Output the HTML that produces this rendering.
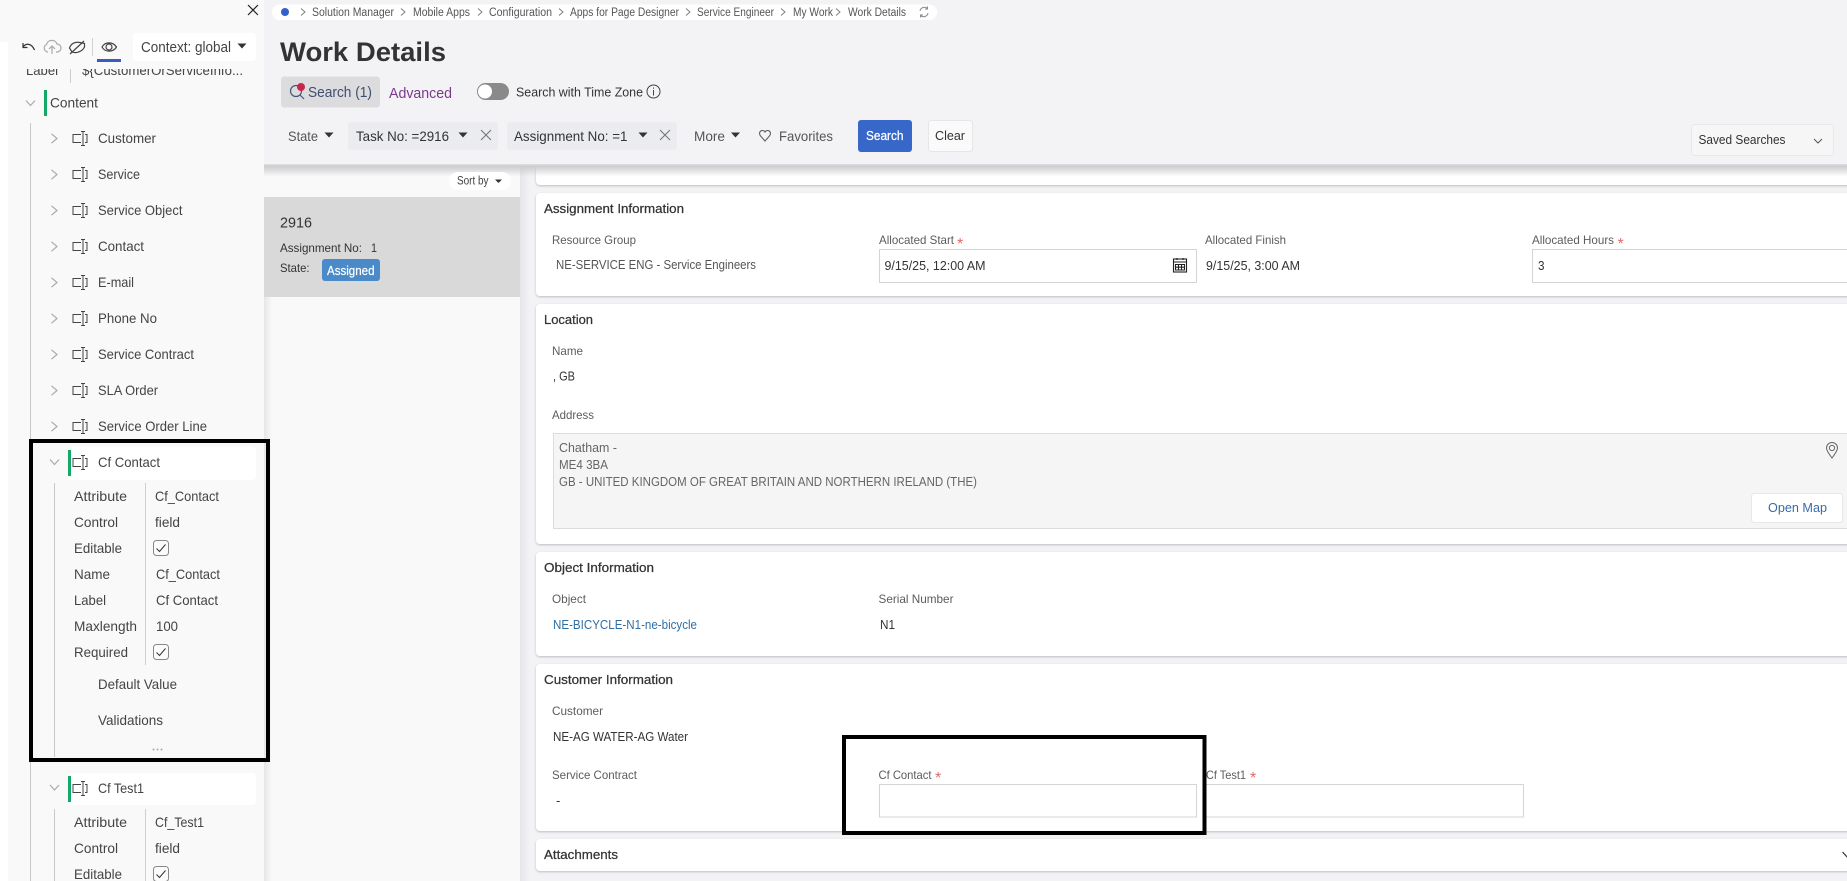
<!DOCTYPE html>
<html lang="en">
<head>
<meta charset="utf-8">
<title>Work Details</title>
<style>
html,body{margin:0;padding:0;width:1847px;height:881px;overflow:hidden;background:#f3f2f5}
svg{display:block}
text{font-family:"Liberation Sans",Arial,sans-serif;white-space:pre}
.t{font-size:14px;fill:#444}
.l{font-size:12px;fill:#5c5c5c}
.v{font-size:13px;fill:#333}
.h{font-size:13px;fill:#333;stroke:#333;stroke-width:.25}
.b{font-size:11.5px;fill:#555}
.f{font-size:14px;fill:#555}
.r{font-size:16px;fill:#e06a6a}
.cards{filter:drop-shadow(0 1px 1px rgba(0,0,0,.22))}
</style>
</head>
<body>
<svg xmlns="http://www.w3.org/2000/svg" width="1847" height="881" viewBox="0 0 1847 881">
<defs>
<linearGradient id="sh" x1="0" y1="0" x2="0" y2="1"><stop offset="0" stop-color="#c9c9cb"/><stop offset="1" stop-color="#c9c9cb" stop-opacity="0"/></linearGradient>
<linearGradient id="sv" x1="0" y1="0" x2="1" y2="0"><stop offset="0" stop-color="#e6e6e8"/><stop offset="1" stop-color="#e6e6e8" stop-opacity="0"/></linearGradient>
<g id="fld" fill="none" stroke="#444" stroke-width="1"><path d="M1-4H-7V4H1M3-7V7M1-7H5M1 7H5M5-4H7V4H5"/></g>
<path id="cr" d="M-2.5-4.7L3 0-2.5 4.7" fill="none" stroke="#aaa" stroke-width="1.2"/>
<path id="cd" d="M-4.5-2.5L0 2.5 4.5-2.5" fill="none" stroke="#aaa" stroke-width="1.2"/>
<path id="bc" d="M-2-3.5L2 0-2 3.5" fill="none" stroke="#777" stroke-width=".9"/>
<path id="tri" d="M-4.5-2.5H4.5L0 2.5Z" fill="#333"/>
<path id="x" d="M-5-5L5 5M5-5L-5 5" fill="none" stroke="#777" stroke-width="1.1"/>
<g id="chk"><rect x="0.5" y="0.5" width="15" height="15" rx="3" fill="#fbfbfb" stroke="#888"/><path d="M3.5 8.5L6.5 11.5 12.5 4.5" fill="none" stroke="#333" stroke-width="1"/></g>
</defs>

<!-- base -->
<rect width="1847" height="881" fill="#f3f2f5"/>
<!-- left panel -->
<rect x="0" y="0" width="264" height="881" fill="#ffffff"/>
<rect x="0" y="0" width="264" height="42" fill="#f9f9f9"/>
<rect x="8" y="42" width="256" height="839" fill="#f9f9f9"/>
<!-- list column -->
<rect x="264" y="165" width="256" height="716" fill="#f9f9f9"/>
<rect x="264" y="297" width="8" height="584" fill="url(#sv)"/>
<rect x="520" y="165" width="10" height="716" fill="url(#sv)"/>

<!-- cards -->
<g fill="#fff" class="cards">
<rect x="536" y="150" width="1320" height="35" rx="4"/>
<rect x="536" y="193" width="1320" height="103" rx="4"/>
<rect x="536" y="304" width="1320" height="240" rx="4"/>
<rect x="536" y="552" width="1320" height="104" rx="4"/>
<rect x="536" y="664" width="1320" height="167" rx="4"/>
<rect x="536" y="839" width="1320" height="32" rx="4"/>
</g>

<!-- header -->
<rect x="264" y="0" width="1583" height="165" fill="#f3f2f5"/>
<rect x="264" y="164" width="1583" height="1.5" fill="#dcdcde"/>
<rect x="264" y="165.5" width="1583" height="11" fill="url(#sh)"/>

<!-- breadcrumb -->
<rect x="272" y="4.5" width="665" height="15.5" rx="7.7" fill="#fff"/>
<circle cx="285" cy="12" r="4" fill="#3560c8"/>
<use href="#bc" x="303" y="12"/><text class="b" x="312" y="16" textLength="82" lengthAdjust="spacingAndGlyphs">Solution Manager</text>
<use href="#bc" x="403" y="12"/><text class="b" x="413" y="16" textLength="57" lengthAdjust="spacingAndGlyphs">Mobile Apps</text>
<use href="#bc" x="480" y="12"/><text class="b" x="489" y="16" textLength="63" lengthAdjust="spacingAndGlyphs">Configuration</text>
<use href="#bc" x="561" y="12"/><text class="b" x="570" y="16" textLength="109" lengthAdjust="spacingAndGlyphs">Apps for Page Designer</text>
<use href="#bc" x="688" y="12"/><text class="b" x="697" y="16" textLength="77" lengthAdjust="spacingAndGlyphs">Service Engineer</text>
<use href="#bc" x="783" y="12"/><text class="b" x="793" y="16" textLength="40" lengthAdjust="spacingAndGlyphs">My Work</text>
<use href="#bc" x="838" y="12"/><text class="b" x="848" y="16" textLength="58" lengthAdjust="spacingAndGlyphs">Work Details</text>
<g fill="none" stroke="#888" stroke-width="1"><path d="M920 11a4.5 4.5 0 0 1 7.5-2.5M928 13a4.5 4.5 0 0 1-7.5 2.5"/><path d="M927.5 6.5V9H925M920.5 17.5V15H923"/></g>

<!-- title -->
<text x="280" y="61" font-size="27" font-weight="bold" fill="#333" textLength="166" lengthAdjust="spacingAndGlyphs">Work Details</text>

<!-- search tabs -->
<rect x="281" y="76.5" width="99" height="31" rx="3" fill="#dcdcde"/>
<circle cx="296" cy="91" r="5.5" fill="none" stroke="#44557a" stroke-width="1.2"/><path d="M300 95L304 99" stroke="#44557a" stroke-width="1.2"/>
<circle cx="301" cy="87" r="4" fill="#c8264a"/>
<text x="308" y="97" font-size="14.5" fill="#3f4d6e" textLength="64" lengthAdjust="spacingAndGlyphs">Search (1)</text>
<text x="389" y="98" font-size="14.5" fill="#7b3a8b" textLength="63" lengthAdjust="spacingAndGlyphs">Advanced</text>
<rect x="477" y="83" width="32" height="17" rx="8.5" fill="#8a8a8a"/>
<circle cx="485" cy="91.5" r="7" fill="#fff"/>
<text class="v" x="516" y="96.5" textLength="127" lengthAdjust="spacingAndGlyphs">Search with Time Zone</text>
<circle cx="653.5" cy="91.5" r="6.5" fill="none" stroke="#444"/><path d="M653.5 90V95.5M653.5 87.5V88.8" stroke="#444"/>

<!-- filter row -->
<text class="f" x="288" y="141" textLength="30" lengthAdjust="spacingAndGlyphs">State</text><use href="#tri" x="329" y="135"/>
<rect x="348" y="122" width="150" height="28" rx="3" fill="#eaecef"/>
<text class="f" x="356" y="141" style="fill:#333" textLength="93" lengthAdjust="spacingAndGlyphs">Task No: =2916</text><use href="#tri" x="463" y="135"/><use href="#x" x="486" y="135"/>
<rect x="507" y="122" width="170" height="28" rx="3" fill="#eaecef"/>
<text class="f" x="514" y="141" style="fill:#333" textLength="113.5" lengthAdjust="spacingAndGlyphs">Assignment No: =1</text><use href="#tri" x="643" y="135"/><use href="#x" x="665" y="135"/>
<text class="f" x="694" y="141" textLength="31" lengthAdjust="spacingAndGlyphs">More</text><use href="#tri" x="735.5" y="135"/>
<path d="M765 141L760.5 136C758.5 133 760 130.5 762.5 130.5 763.7 130.5 764.5 131 765 132 765.5 131 766.3 130.5 767.5 130.5 770 130.5 771.5 133 769.5 136Z" fill="none" stroke="#555"/>
<text class="f" x="779" y="141" textLength="54" lengthAdjust="spacingAndGlyphs">Favorites</text>
<rect x="858" y="120" width="54" height="32" rx="3" fill="#3667c9"/>
<text x="866" y="140" font-size="13" fill="#fff" stroke="#fff" stroke-width=".25" textLength="37.5" lengthAdjust="spacingAndGlyphs">Search</text>
<rect x="928.5" y="120.5" width="44" height="31" rx="3" fill="#fafafa" stroke="#e6e6e8"/>
<text class="v" x="935" y="140" textLength="30" lengthAdjust="spacingAndGlyphs">Clear</text>
<rect x="1691.5" y="124.5" width="142" height="31" rx="3" fill="#f6f6f7" stroke="#e8e8ea"/>
<text class="v" x="1698.5" y="144" textLength="87" lengthAdjust="spacingAndGlyphs">Saved Searches</text>
<path d="M1814 139L1818 143 1822 139" fill="none" stroke="#555" stroke-width="1"/>

<!-- list -->
<rect x="449" y="172" width="62" height="18" rx="9" fill="#fff"/>
<text x="457" y="184.5" font-size="11.5" fill="#444" textLength="31.5" lengthAdjust="spacingAndGlyphs">Sort by</text>
<path d="M495 179.5H502L498.5 183Z" fill="#333"/>
<rect x="264" y="197" width="256" height="100" fill="#d9d9d9"/>
<text x="280" y="227.5" font-size="15" fill="#333" textLength="32" lengthAdjust="spacingAndGlyphs">2916</text>
<text class="l" x="280" y="252" style="fill:#333" textLength="82" lengthAdjust="spacingAndGlyphs">Assignment No:</text>
<text class="l" x="371" y="252" style="fill:#333" textLength="6" lengthAdjust="spacingAndGlyphs">1</text>
<text class="l" x="280" y="272" style="fill:#333" textLength="29.5" lengthAdjust="spacingAndGlyphs">State:</text>
<rect x="322" y="259" width="58" height="22" rx="3" fill="#4a8ac9"/>
<text x="327" y="275" font-size="12.5" fill="#fff" stroke="#fff" stroke-width=".2" textLength="47.5" lengthAdjust="spacingAndGlyphs">Assigned</text>

<!-- assignment -->
<text class="h" x="544" y="213" textLength="140" lengthAdjust="spacingAndGlyphs">Assignment Information</text>
<text class="l" x="552" y="244" textLength="84" lengthAdjust="spacingAndGlyphs">Resource Group</text>
<text class="v" x="556" y="269" style="fill:#555" textLength="200" lengthAdjust="spacingAndGlyphs">NE-SERVICE ENG - Service Engineers</text>
<text class="l" x="879" y="244" textLength="75" lengthAdjust="spacingAndGlyphs">Allocated Start</text><text class="r" x="957" y="249">*</text>
<rect x="879.5" y="249.5" width="317" height="33" fill="#fff" stroke="#d4d4d6"/>
<text class="v" x="884.5" y="270" textLength="101" lengthAdjust="spacingAndGlyphs">9/15/25, 12:00 AM</text>
<g fill="none" stroke="#222" stroke-width="1.1"><rect x="1173.5" y="259" width="13" height="13"/><path d="M1173.5 262H1186.5M1175.5 264.5H1184.5V270H1175.5ZM1175.5 267.2H1184.5M1178.5 264.5V270M1181.5 264.5V270M1177 258V260M1183 258V260"/></g>
<text class="l" x="1205" y="244" textLength="81" lengthAdjust="spacingAndGlyphs">Allocated Finish</text>
<text class="v" x="1206" y="270" textLength="94" lengthAdjust="spacingAndGlyphs">9/15/25, 3:00 AM</text>
<text class="l" x="1532" y="244" textLength="82" lengthAdjust="spacingAndGlyphs">Allocated Hours</text><text class="r" x="1617.5" y="249">*</text>
<rect x="1532.5" y="249.5" width="330" height="33" fill="#fff" stroke="#d4d4d6"/>
<text class="v" x="1538" y="270" textLength="6.5" lengthAdjust="spacingAndGlyphs">3</text>

<!-- location -->
<text class="h" x="544" y="324" textLength="49" lengthAdjust="spacingAndGlyphs">Location</text>
<text class="l" x="552" y="355" textLength="31" lengthAdjust="spacingAndGlyphs">Name</text>
<text class="v" x="553" y="380.5" textLength="22" lengthAdjust="spacingAndGlyphs">, GB</text>
<text class="l" x="552" y="419" textLength="42" lengthAdjust="spacingAndGlyphs">Address</text>
<rect x="553.5" y="433.5" width="1320" height="95" fill="#f5f5f5" stroke="#dcdcdc"/>
<text class="v" x="559" y="452" style="fill:#666" textLength="58" lengthAdjust="spacingAndGlyphs">Chatham -</text>
<text class="v" x="559" y="469" style="fill:#666" textLength="49" lengthAdjust="spacingAndGlyphs">ME4 3BA</text>
<text class="v" x="559" y="486" style="fill:#666" textLength="418" lengthAdjust="spacingAndGlyphs">GB - UNITED KINGDOM OF GREAT BRITAIN AND NORTHERN IRELAND (THE)</text>
<path d="M1832 458C1829 454 1826.5 450 1826.5 448A5.5 5.5 0 0 1 1837.5 448C1837.5 450 1835 454 1832 458Z" fill="none" stroke="#666"/><circle cx="1832" cy="448" r="2.6" fill="none" stroke="#666"/>
<rect x="1751.5" y="493.5" width="91" height="29" rx="3" fill="#fff" stroke="#e8e8ea"/>
<text class="v" x="1768" y="512" style="fill:#3a6aa8" textLength="59" lengthAdjust="spacingAndGlyphs">Open Map</text>

<!-- object -->
<text class="h" x="544" y="572" textLength="110" lengthAdjust="spacingAndGlyphs">Object Information</text>
<text class="l" x="552" y="603" textLength="34" lengthAdjust="spacingAndGlyphs">Object</text>
<text class="l" x="878.5" y="603" textLength="75" lengthAdjust="spacingAndGlyphs">Serial Number</text>
<text class="v" x="553" y="629" style="fill:#2f6ea5" textLength="144" lengthAdjust="spacingAndGlyphs">NE-BICYCLE-N1-ne-bicycle</text>
<text class="v" x="880" y="629" textLength="15" lengthAdjust="spacingAndGlyphs">N1</text>

<!-- customer -->
<text class="h" x="544" y="684" textLength="129" lengthAdjust="spacingAndGlyphs">Customer Information</text>
<text class="l" x="552" y="715" textLength="51" lengthAdjust="spacingAndGlyphs">Customer</text>
<text class="v" x="553" y="741" textLength="135" lengthAdjust="spacingAndGlyphs">NE-AG WATER-AG Water</text>
<text class="l" x="552" y="779" textLength="85" lengthAdjust="spacingAndGlyphs">Service Contract</text>
<text class="v" x="556" y="805">-</text>
<text class="l" x="878.5" y="779" textLength="53" lengthAdjust="spacingAndGlyphs">Cf Contact</text><text class="r" x="935" y="783">*</text>
<rect x="879.5" y="784.5" width="317" height="32.5" fill="#fff" stroke="#d4d4d6"/>
<text class="l" x="1206" y="779" textLength="40" lengthAdjust="spacingAndGlyphs">Cf Test1</text><text class="r" x="1250" y="783">*</text>
<rect x="1205.5" y="784.5" width="318" height="32.5" fill="#fff" stroke="#d4d4d6"/>
<rect x="844" y="737" width="360.5" height="96" fill="none" stroke="#000" stroke-width="4"/>

<!-- attachments -->
<text class="h" x="544" y="859" textLength="74" lengthAdjust="spacingAndGlyphs">Attachments</text>
<path d="M1842.5 852L1848 858" fill="none" stroke="#333" stroke-width="1.2"/>

<!-- left panel top -->
<path d="M248 5L258 15M258 5L248 15" fill="none" stroke="#222" stroke-width="1.2"/>
<g fill="none" stroke="#333" stroke-width="1.2"><path d="M23 43V47.5H27.5"/><path d="M23 47C26 43 31.5 43 34.5 50"/></g>
<g fill="none" stroke="#aaa" stroke-width="1.2"><path d="M48 52H47.5A4 4 0 0 1 46.5 44.5A5.5 5.5 0 0 1 57 44A4 4 0 0 1 57 52H56"/><path d="M52 54V46.5M49 49L52 46 55 49"/></g>
<g fill="none" stroke="#444" stroke-width="1.2"><path d="M69.5 48C71 43.5 75 41.5 80 42.5L84.5 43.5V47C82 52 76 53.5 72 52Z"/><path d="M70 54L84 41"/></g>
<rect x="92" y="38" width="1" height="18" fill="#d0d0d0"/>
<g fill="none" stroke="#444" stroke-width="1.2"><path d="M102 47C105 41.5 113 41.5 116.5 47C113 52.5 105 52.5 102 47Z"/><circle cx="109" cy="47" r="3"/></g>
<rect x="97" y="59" width="24" height="3" fill="#3b5bbf"/>
<rect x="133" y="33" width="123" height="28" rx="4" fill="#fff"/>
<text x="141" y="52" font-size="14.5" fill="#444" textLength="90" lengthAdjust="spacingAndGlyphs">Context: global</text>
<use href="#tri" x="242" y="46"/>

<!-- clipped label -->
<svg x="8" y="69" width="256" height="17" viewBox="8 69 256 17">
<text class="t" x="26" y="75" textLength="32" lengthAdjust="spacingAndGlyphs">Label</text>
<text class="t" x="82" y="75" textLength="161" lengthAdjust="spacingAndGlyphs">${CustomerOrServiceInfo...</text>
</svg>
<rect x="70" y="69" width="1" height="14" fill="#ccc"/>

<!-- tree -->
<use href="#cd" x="30.5" y="103"/>
<rect x="44" y="90" width="3" height="26" fill="#12a865"/>
<text class="t" x="50" y="107.5" textLength="48" lengthAdjust="spacingAndGlyphs">Content</text>
<rect x="30" y="123" width="1" height="758" fill="#c9c9c9"/>

<use href="#cr" x="54" y="138.5"/><use href="#fld" x="80" y="138.5"/><text class="t" x="98" y="143" textLength="58" lengthAdjust="spacingAndGlyphs">Customer</text>
<use href="#cr" x="54" y="174.5"/><use href="#fld" x="80" y="174.5"/><text class="t" x="98" y="179" textLength="42" lengthAdjust="spacingAndGlyphs">Service</text>
<use href="#cr" x="54" y="210.5"/><use href="#fld" x="80" y="210.5"/><text class="t" x="98" y="215" textLength="84.5" lengthAdjust="spacingAndGlyphs">Service Object</text>
<use href="#cr" x="54" y="246.5"/><use href="#fld" x="80" y="246.5"/><text class="t" x="98" y="251" textLength="46" lengthAdjust="spacingAndGlyphs">Contact</text>
<use href="#cr" x="54" y="282.5"/><use href="#fld" x="80" y="282.5"/><text class="t" x="98" y="287" textLength="36" lengthAdjust="spacingAndGlyphs">E-mail</text>
<use href="#cr" x="54" y="318.5"/><use href="#fld" x="80" y="318.5"/><text class="t" x="98" y="323" textLength="59" lengthAdjust="spacingAndGlyphs">Phone No</text>
<use href="#cr" x="54" y="354.5"/><use href="#fld" x="80" y="354.5"/><text class="t" x="98" y="359" textLength="96" lengthAdjust="spacingAndGlyphs">Service Contract</text>
<use href="#cr" x="54" y="390.5"/><use href="#fld" x="80" y="390.5"/><text class="t" x="98" y="395" textLength="60" lengthAdjust="spacingAndGlyphs">SLA Order</text>
<use href="#cr" x="54" y="426.5"/><use href="#fld" x="80" y="426.5"/><text class="t" x="98" y="431" textLength="109" lengthAdjust="spacingAndGlyphs">Service Order Line</text>

<!-- Cf Contact -->
<rect x="68" y="447" width="188" height="33" rx="4" fill="#fff"/>
<rect x="68" y="450" width="3" height="26" fill="#12a865"/>
<use href="#cd" x="54.5" y="462"/><use href="#fld" x="80" y="462.5"/>
<text class="t" x="98" y="467" textLength="62" lengthAdjust="spacingAndGlyphs">Cf Contact</text>
<rect x="54" y="483" width="1" height="274" fill="#c9c9c9"/>
<rect x="145" y="483" width="1" height="182" fill="#d0d0d0"/>
<text class="t" x="74" y="501" textLength="53" lengthAdjust="spacingAndGlyphs">Attribute</text><text class="t" x="155" y="501" textLength="64" lengthAdjust="spacingAndGlyphs">Cf_Contact</text>
<text class="t" x="74" y="527" textLength="44" lengthAdjust="spacingAndGlyphs">Control</text><text class="t" x="155" y="527" textLength="25" lengthAdjust="spacingAndGlyphs">field</text>
<text class="t" x="74" y="553" textLength="48" lengthAdjust="spacingAndGlyphs">Editable</text><use href="#chk" x="153" y="540"/>
<text class="t" x="74" y="579" textLength="36" lengthAdjust="spacingAndGlyphs">Name</text><text class="t" x="156" y="579" textLength="64" lengthAdjust="spacingAndGlyphs">Cf_Contact</text>
<text class="t" x="74" y="605" textLength="32" lengthAdjust="spacingAndGlyphs">Label</text><text class="t" x="156" y="605" textLength="62" lengthAdjust="spacingAndGlyphs">Cf Contact</text>
<text class="t" x="74" y="631" textLength="63" lengthAdjust="spacingAndGlyphs">Maxlength</text><text class="t" x="156" y="631" textLength="22" lengthAdjust="spacingAndGlyphs">100</text>
<text class="t" x="74" y="657" textLength="54" lengthAdjust="spacingAndGlyphs">Required</text><use href="#chk" x="153" y="644"/>
<text class="t" x="98" y="689" textLength="79" lengthAdjust="spacingAndGlyphs">Default Value</text>
<text class="t" x="98" y="725" textLength="65" lengthAdjust="spacingAndGlyphs">Validations</text>
<g fill="#aaa"><circle cx="153.5" cy="749.5" r="1"/><circle cx="157.5" cy="749.5" r="1"/><circle cx="161.5" cy="749.5" r="1"/></g>
<rect x="31" y="441" width="237" height="319" fill="none" stroke="#000" stroke-width="4"/>

<!-- Cf Test1 -->
<rect x="68" y="773" width="188" height="32" rx="4" fill="#fff"/>
<rect x="68" y="776" width="3" height="26" fill="#12a865"/>
<use href="#cd" x="54.5" y="787.5"/><use href="#fld" x="80" y="788.5"/>
<text class="t" x="98" y="793" textLength="46" lengthAdjust="spacingAndGlyphs">Cf Test1</text>
<rect x="54" y="809" width="1" height="72" fill="#c9c9c9"/>
<rect x="145" y="809" width="1" height="72" fill="#d0d0d0"/>
<text class="t" x="74" y="827" textLength="53" lengthAdjust="spacingAndGlyphs">Attribute</text><text class="t" x="155" y="827" textLength="49" lengthAdjust="spacingAndGlyphs">Cf_Test1</text>
<text class="t" x="74" y="853" textLength="44" lengthAdjust="spacingAndGlyphs">Control</text><text class="t" x="155" y="853" textLength="25" lengthAdjust="spacingAndGlyphs">field</text>
<text class="t" x="74" y="879" textLength="48" lengthAdjust="spacingAndGlyphs">Editable</text><use href="#chk" x="153" y="866"/>
</svg>
</body>
</html>
